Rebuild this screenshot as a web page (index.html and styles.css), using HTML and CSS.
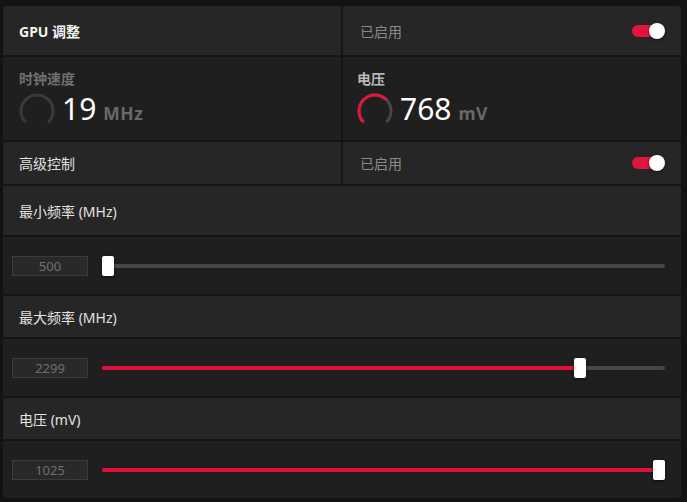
FILE: index.html
```html
<!DOCTYPE html>
<html lang="zh-CN">
<head>
<meta charset="utf-8">
<title>GPU 调整</title>
<link rel="stylesheet" href="styles.css">
</head>
<body>
<div class="panel">
  <div class="row two h-head">
    <div class="cell"><span class="title">GPU 调整</span></div>
    <div class="cell cell-right"><span class="state">已启用</span><span class="toggle"><span class="knob"></span></span></div>
  </div>
  <div class="row two h-gauge">
    <div class="cell gauge-cell">
      <div class="glabel dim">时钟速度</div>
      <div class="gline">
        <svg class="gauge" viewBox="0 0 36 36">
          <path class="g-track dimtrack" d="M6.69 29.31 A16 16 0 1 1 29.31 29.31" pathLength="100"/>
          <path class="g-fill dimfill" d="M6.69 29.31 A16 16 0 1 1 29.31 29.31" pathLength="100" stroke-dasharray="2 200"/>
        </svg>
        <span class="val">19<span class="unit">MHz</span></span>
      </div>
    </div>
    <div class="cell gauge-cell">
      <div class="glabel">电压</div>
      <div class="gline">
        <svg class="gauge" viewBox="0 0 36 36">
          <path class="g-track" d="M6.69 29.31 A16 16 0 1 1 29.31 29.31" pathLength="100"/>
          <path class="g-fill" d="M6.69 29.31 A16 16 0 1 1 29.31 29.31" pathLength="100" stroke-dasharray="67 200"/>
        </svg>
        <span class="val">768<span class="unit">mV</span></span>
      </div>
    </div>
  </div>
  <div class="row two h-adv">
    <div class="cell"><span class="label">高级控制</span></div>
    <div class="cell cell-right"><span class="state">已启用</span><span class="toggle"><span class="knob"></span></span></div>
  </div>
  <div class="row h-label1"><div class="cell"><span class="label">最小频率 (MHz)</span></div></div>
  <div class="row h-slider">
    <div class="cell slider-cell">
      <div class="numbox">500</div>
      <div class="track"><div class="fill" style="width: 0%"></div><div class="thumb" style="left: calc((100% - 12px) * 0)"></div></div>
    </div>
  </div>
  <div class="row h-label"><div class="cell"><span class="label">最大频率 (MHz)</span></div></div>
  <div class="row h-slider">
    <div class="cell slider-cell">
      <div class="numbox">2299</div>
      <div class="track"><div class="fill" style="width: calc((100% - 12px) * 0.857 + 6px)"></div><div class="thumb" style="left: calc((100% - 12px) * 0.857)"></div></div>
    </div>
  </div>
  <div class="row h-label"><div class="cell"><span class="label">电压 (mV)</span></div></div>
  <div class="row h-slider last">
    <div class="cell slider-cell">
      <div class="numbox">1025</div>
      <div class="track"><div class="fill" style="width: calc((100% - 12px) * 1 + 6px)"></div><div class="thumb" style="left: calc((100% - 12px) * 1)"></div></div>
    </div>
  </div>
</div>
</body>
</html>
```

FILE: styles.css
```css
html, body {
  margin: 0;
  padding: 0;
  background: #131313;
}
body {
  width: 687px;
  height: 502px;
  padding: 6px 6px 4px 3px;
  box-sizing: border-box;
  font-family: "Noto Sans", "Noto Sans CJK SC", sans-serif;
  color: #e4e4e4;
  overflow: hidden;
}
.panel {
  display: flex;
  flex-direction: column;
  gap: 2px;
  background: #151515;
  border-radius: 3px;
  overflow: hidden;
}
.row {
  display: flex;
}
.row.two {
  display: grid;
  grid-template-columns: 338px 338px;
  gap: 2px;
}
.cell {
  flex: 1;
  display: flex;
  align-items: center;
  padding: 0 16px;
  background: #262626;
}
.h-head { height: 49px; }
.h-gauge { height: 83px; }
.h-adv { height: 42px; }
.h-label1 { height: 49px; }
.h-label { height: 41px; }
.h-slider { height: 57px; }

.title {
  font-size: 14px;
  font-weight: 700;
  color: #f4f4f4;
}
.label {
  font-size: 14px;
  color: #e2e2e2;
}
.cell-right {
  justify-content: space-between;
  padding-left: 17px;
}
.state {
  font-size: 14px;
  color: #8a8a8a;
}
.toggle {
  position: relative;
  width: 33px;
  height: 16px;
  display: flex;
  align-items: center;
}
.toggle::before {
  content: "";
  display: block;
  width: 28px;
  height: 12px;
  border-radius: 6px;
  background: #e1163e;
}
.knob {
  position: absolute;
  right: 0;
  top: 0;
  width: 16px;
  height: 16px;
  border-radius: 50%;
  background: #fff;
  box-shadow: 0 1px 3px rgba(0, 0, 0, 0.6);
}

.gauge-cell {
  background: #1f1f1f;
  flex-direction: column;
  align-items: flex-start;
  justify-content: flex-start;
  padding: 12px 16px 9px 16px;
  box-sizing: border-box;
}
.gauge-cell + .gauge-cell { padding-left: 14px; }
.glabel {
  font-size: 14px;
  font-weight: 700;
  line-height: 20px;
  color: #b9b9b9;
}
.glabel.dim { color: #6f6f6f; }
.gline {
  margin-top: 4px;
  display: flex;
  align-items: center;
  height: 36px;
}
.gauge {
  width: 36px;
  height: 36px;
  flex: none;
}
.g-track {
  fill: none;
  stroke: #474747;
  stroke-width: 3;
}
.g-track.dimtrack { stroke: #3a3a3a; }
.g-fill {
  fill: none;
  stroke: #e1163e;
  stroke-width: 3;
}
.g-fill.dimfill { stroke: #5a1c28; }
.val {
  margin-left: 7px;
  font-size: 30px;
  line-height: 38px;
  color: #ffffff;
}
.unit {
  margin-left: 7px;
  font-size: 17.5px;
  font-weight: 700;
  color: #686868;
  letter-spacing: 0.5px;
}

.slider-cell {
  background: #1f1f1f;
  padding: 0 16px 0 9px;
  gap: 14px;
}
.numbox {
  width: 76px;
  height: 20px;
  box-sizing: border-box;
  border: 1px solid #3b3b3b;
  background: #292929;
  color: #6f6f6f;
  font-size: 13px;
  line-height: 18px;
  text-align: center;
  flex: none;
}
.track {
  position: relative;
  flex: 1;
  height: 4px;
  border-radius: 2px;
  background: #474747;
}
.fill {
  position: absolute;
  left: 0;
  top: 0;
  height: 4px;
  border-radius: 2px;
  background: #df1039;
}
.thumb {
  position: absolute;
  top: -8px;
  width: 12px;
  height: 20px;
  border-radius: 2px;
  background: #ffffff;
  box-shadow: 0 1px 3px rgba(0, 0, 0, 0.7);
}
```
